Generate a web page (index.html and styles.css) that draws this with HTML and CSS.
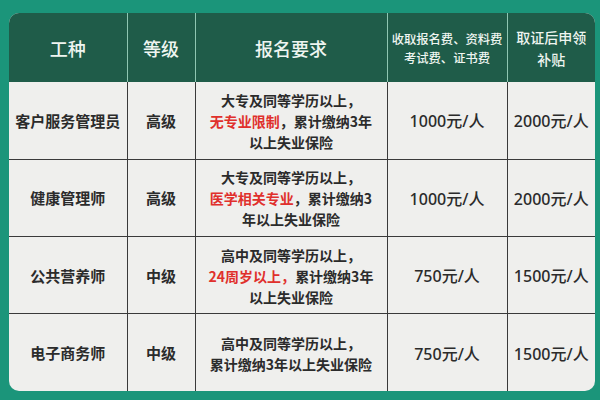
FILE: index.html
```html
<!DOCTYPE html>
<html lang="zh">
<head>
<meta charset="utf-8">
<link rel="stylesheet" href="styles.css">
</head>
<body>
<div class="page">
  <div class="card">
    <table class="grid">
      <colgroup>
        <col class="c1"><col class="c2"><col class="c3"><col class="c4"><col class="c5">
      </colgroup>
      <thead>
        <tr>
          <th class="big">工种</th>
          <th class="big">等级</th>
          <th class="big">报名要求</th>
          <th class="small">收取报名费、资料费<br>考试费、证书费</th>
          <th class="mid">取证后申领<br>补贴</th>
        </tr>
      </thead>
      <tbody>
        <tr>
          <td>客户服务管理员</td>
          <td>高级</td>
          <td class="req">大专及同等学历以上，<br><span class="red">无专业限制</span>，累计缴纳3年<br>以上失业保险</td>
          <td class="price">1000元/人</td>
          <td class="price">2000元/人</td>
        </tr>
        <tr>
          <td>健康管理师</td>
          <td>高级</td>
          <td class="req">大专及同等学历以上，<br><span class="red">医学相关专业</span>，累计缴纳3<br>年以上失业保险</td>
          <td class="price">1000元/人</td>
          <td class="price">2000元/人</td>
        </tr>
        <tr>
          <td>公共营养师</td>
          <td>中级</td>
          <td class="req">高中及同等学历以上，<br><span class="red">24周岁以上，</span>累计缴纳3年<br>以上失业保险</td>
          <td class="price">750元/人</td>
          <td class="price">1500元/人</td>
        </tr>
        <tr>
          <td>电子商务师</td>
          <td>中级</td>
          <td class="req">高中及同等学历以上，<br>累计缴纳3年以上失业保险</td>
          <td class="price">750元/人</td>
          <td class="price">1500元/人</td>
        </tr>
      </tbody>
    </table>
  </div>
</div>
</body>
</html>
```
FILE: styles.css
```css
html, body {
  margin: 0;
  padding: 0;
}
body {
  width: 600px;
  height: 400px;
  background: #1b957a;
  font-family: "Noto Sans CJK SC", "Noto Sans", sans-serif;
  overflow: hidden;
}
.page {
  padding: 13px 5px 0 9px;
}
.card {
  width: 586px;
  height: 378px;
  border-radius: 10px;
  overflow: hidden;
  background: #efefed;
}
.grid {
  width: 100%;
  height: 100%;
  border-collapse: collapse;
  table-layout: fixed;
}
.c1 { width: 118px; }
.c2 { width: 68px; }
.c3 { width: 192px; }
.c4 { width: 120px; }
.c5 { width: 88px; }
thead tr { height: 69px; }
tbody tr { height: 77px; }
th {
  background: #1f5c49;
  color: #eef5f0;
  font-weight: 500;
  border-left: 1px solid #8fc6b2;
  padding: 0;
  text-align: center;
  vertical-align: middle;
}
th:first-child { border-left: none; }
th.big { font-size: 18px; }
th.small { font-size: 12.3px; line-height: 19px; padding-top: 2px; white-space: nowrap; }
th.mid { font-size: 14px; line-height: 22px; }
td {
  border: 1px solid #3a3a3a;
  color: #2b2b2b;
  font-size: 15px;
  font-weight: 700;
  text-align: center;
  vertical-align: middle;
  padding: 0;
}
tbody tr:first-child td { border-top: none; }
tbody tr:last-child td { border-bottom: none; }
td:first-child { border-left: none; }
td:last-child { border-right: none; }
td.req {
  font-size: 14px;
  line-height: 21px;
  padding-top: 2px;
  white-space: nowrap;
}
td.price {
  font-size: 16px;
  font-weight: 500;
  font-family: "Noto Sans", "Noto Sans CJK SC", sans-serif;
}
.red { color: #e0302c; }
```
